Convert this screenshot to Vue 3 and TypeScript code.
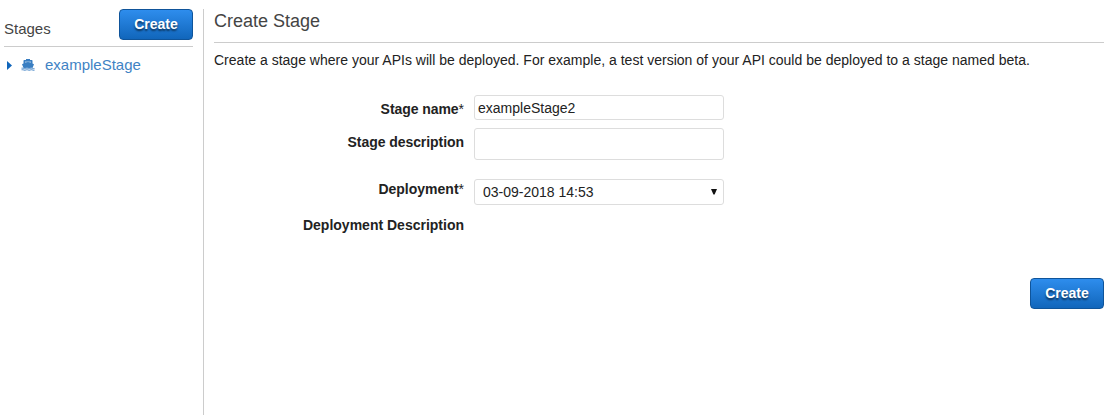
<script setup lang="ts">
import { ref } from 'vue'

const stages = ref<string[]>(['exampleStage'])
const deployments = ['03-09-2018 14:53']
const stageName = ref('exampleStage2')
const description = ref('')
const deployment = ref(deployments[0])
</script>

<template>
  <div class="page">
    <aside class="sidebar">
      <header class="side-head">
        <span class="side-title">Stages</span>
        <button class="btn" type="button">Create</button>
      </header>
      <div v-for="stage in stages" :key="stage" class="stage">
        <svg class="caret" width="5" height="9" viewBox="0 0 5 9"><path d="M0 0L5 4.500L0 9Z" fill="#1166bb" /></svg>
        <svg class="ship" width="14" height="12" viewBox="0 0 14 12">
          <path d="M5 0h4v1h1.800q.7 0 .7.7v2.900l1.500.7L11.500 9H2.500L1 5.300l1.500-.7V1.700q0-.7.7-.7H5z" fill="#397ec2" />
          <path d="M4 2.400h6v1.300L7 2.900l-3 .8z" fill="#a9c8e6" />
          <path d="M.5 9.400q1.100-.6 2.200 0t2.200 0 2.200 0 2.200 0 2.200 0 2 0M.5 11q1.100-.6 2.200 0t2.200 0 2.200 0 2.200 0 2.200 0 2 0" fill="none" stroke="#7fabd8" stroke-width="1.300" />
        </svg>
        <a class="stage-name">{{ stage }}</a>
      </div>
    </aside>
    <main class="main">
      <h1 class="title">Create Stage</h1>
      <p class="intro">Create a stage where your APIs will be deployed. For example, a test version of your API could be deployed to a stage named beta.</p>
      <form class="form" @submit.prevent>
        <label class="label name-label" for="name">Stage name<span class="req">*</span></label>
        <input id="name" v-model="stageName" class="field" type="text" />
        <label class="label desc-label" for="desc">Stage description</label>
        <textarea id="desc" v-model="description" class="field area"></textarea>
        <label class="label dep-label" for="dep">Deployment<span class="req">*</span></label>
        <div class="select-wrap">
          <select id="dep" v-model="deployment" class="field select">
            <option v-for="d in deployments" :key="d">{{ d }}</option>
          </select>
          <svg class="arrow" width="6" height="6" viewBox="0 0 6 6"><path d="M0 0H6L3.600 5.500H2.400Z" fill="#111" /></svg>
        </div>
        <span class="label">Deployment Description</span>
      </form>
      <div class="actions">
        <button class="btn" type="button">Create</button>
      </div>
    </main>
  </div>
</template>

<style>
body {
  margin: 0;
  background: #fff;
}
</style>

<style scoped>
.page {
  display: flex;
  box-sizing: border-box;
  height: 415px;
  padding: 9px 10px 0 4px;
  overflow: hidden;
  font-family: "Liberation Sans", Arial, sans-serif;
  font-size: 14px;
  color: #222;
}
.sidebar {
  box-sizing: border-box;
  width: 200px;
  flex: none;
  padding-right: 10px;
  border-right: 1px solid #ccc;
}
.side-head {
  display: flex;
  justify-content: space-between;
  box-sizing: border-box;
  height: 38px;
  border-bottom: 1px solid #ccc;
}
.side-title {
  padding-top: 11px;
  font-size: 15px;
  line-height: 18px;
  color: #444;
}
.btn {
  box-sizing: border-box;
  width: 74px;
  height: 31px;
  padding: 0;
  border: 1px solid #0f549a;
  border-radius: 4px;
  background: linear-gradient(#2e8ded, #1166bb);
  font: bold 14px/29px "Liberation Sans", Arial, sans-serif;
  color: #fff;
  text-shadow: 0 2px 2px rgba(0, 0, 0, 0.6);
}
.stage {
  display: flex;
  align-items: center;
  height: 18px;
  margin-top: 9px;
  padding-left: 3px;
}
.ship {
  margin-left: 9px;
}
.stage-name {
  margin-left: 10px;
  font-size: 15px;
  line-height: 18px;
  color: #4183c4;
}
.main {
  flex: 1;
  padding-left: 10px;
}
.title {
  box-sizing: border-box;
  height: 34px;
  margin: 0;
  padding-top: 1px;
  border-bottom: 1px solid #ccc;
  font-size: 18px;
  font-weight: normal;
  line-height: 22px;
  color: #444;
}
.intro {
  margin: 9px 0 0;
  line-height: 16px;
  letter-spacing: 0.008px;
  white-space: nowrap;
}
.form {
  display: grid;
  grid-template-columns: 250px 250px;
  grid-template-rows: 33px 51px 38px 16px;
  column-gap: 10px;
  margin-top: 27px;
}
.label {
  font-weight: bold;
  line-height: 16px;
  text-align: right;
}
.name-label,
.desc-label {
  padding-top: 6px;
  letter-spacing: -0.06px;
}
.dep-label {
  padding-top: 2px;
}
.req {
  font-weight: normal;
}
.field {
  box-sizing: border-box;
  display: block;
  width: 250px;
  height: 25px;
  margin: 0;
  padding: 0 3px;
  border: 1px solid #ddd;
  border-radius: 3px;
  outline: none;
  background: #fff;
  font: 14px "Liberation Sans", Arial, sans-serif;
  color: #222;
}
.area {
  height: 32px;
  resize: none;
}
.select-wrap {
  position: relative;
  height: 26px;
}
.select {
  height: 26px;
  padding: 0 8px;
  appearance: none;
}
.arrow {
  position: absolute;
  top: 10px;
  right: 7px;
}
.actions {
  display: flex;
  justify-content: flex-end;
  margin-top: 45px;
}
</style>
